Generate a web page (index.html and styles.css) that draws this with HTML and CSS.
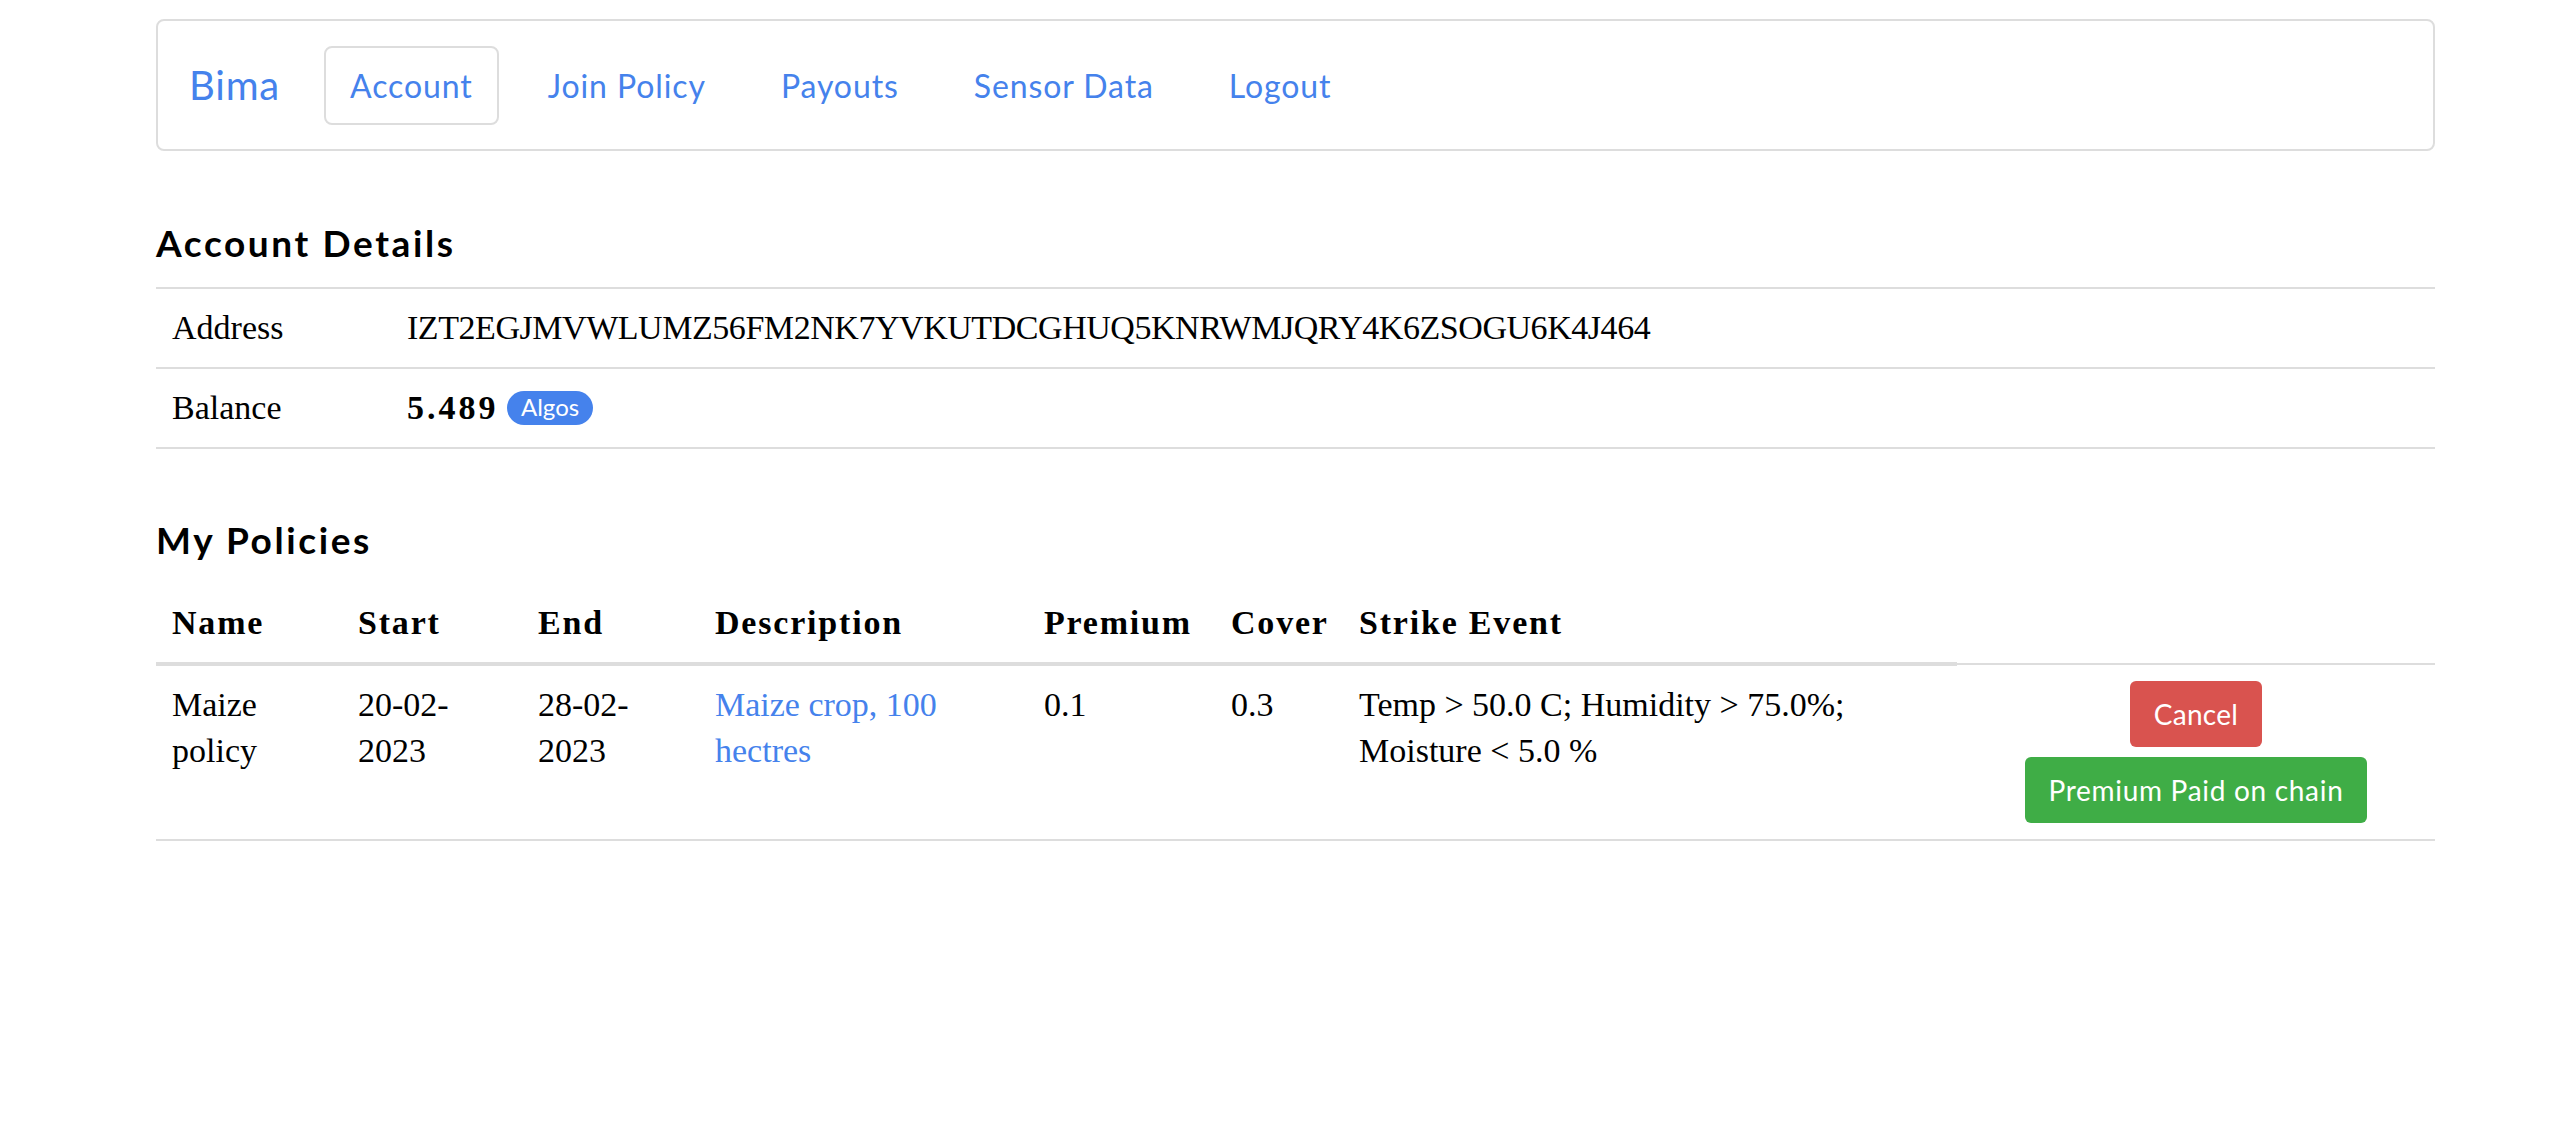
FILE: index.html
```html
<!DOCTYPE html>
<html lang="en">
<head>
<meta charset="utf-8">
<title>Bima - Account</title>
<link rel="stylesheet" href="styles.css">
</head>
<body>
<div class="page">
  <nav class="navbar">
    <a class="brand" href="#">Bima</a>
    <ul class="nav">
      <li class="nav-item active"><a href="#">Account</a></li>
      <li class="nav-item"><a href="#">Join Policy</a></li>
      <li class="nav-item"><a href="#">Payouts</a></li>
      <li class="nav-item"><a href="#">Sensor Data</a></li>
      <li class="nav-item"><a href="#">Logout</a></li>
    </ul>
  </nav>

  <h2 class="section-title first">Account Details</h2>
  <table class="table details">
    <tbody>
      <tr>
        <td class="label-col">Address</td>
        <td class="address">IZT2EGJMVWLUMZ56FM2NK7YVKUTDCGHUQ5KNRWMJQRY4K6ZSOGU6K4J464</td>
      </tr>
      <tr>
        <td class="label-col">Balance</td>
        <td><strong class="amount">5.489</strong> <span class="badge">Algos</span></td>
      </tr>
    </tbody>
  </table>

  <h2 class="section-title">My Policies</h2>
  <table class="table policies">
    <colgroup>
      <col class="c-name">
      <col class="c-start">
      <col class="c-end">
      <col class="c-desc">
      <col class="c-prem">
      <col class="c-cover">
      <col class="c-strike">
      <col class="c-actions">
    </colgroup>
    <thead>
      <tr>
        <th>Name</th>
        <th>Start</th>
        <th>End</th>
        <th>Description</th>
        <th>Premium</th>
        <th>Cover</th>
        <th>Strike Event</th>
      </tr>
    </thead>
    <tbody>
      <tr>
        <td>Maize policy</td>
        <td>20-02-2023</td>
        <td>28-02-2023</td>
        <td><a class="link" href="#">Maize crop, 100 hectres</a></td>
        <td>0.1</td>
        <td>0.3</td>
        <td>Temp &gt; 50.0 C; Humidity &gt; 75.0%; Moisture &lt; 5.0 %</td>
        <td class="actions">
          <div class="action-stack">
            <button class="btn btn-danger">Cancel</button>
            <button class="btn btn-success">Premium Paid on chain</button>
          </div>
        </td>
      </tr>
    </tbody>
  </table>
</div>
</body>
</html>
```

FILE: styles.css
```css
* { box-sizing: border-box; }

html, body {
  margin: 0;
  padding: 0;
  background: #ffffff;
}

body {
  font-family: "Liberation Serif", "DejaVu Serif", serif;
  font-size: 34px;
  line-height: 46px;
  color: #000000;
}

.page {
  width: 2279px;
  margin-left: 156px;
  padding-top: 19px;
}

/* ---------- navbar ---------- */
.navbar {
  height: 132px;
  border: 2px solid #dddddd;
  border-radius: 8px;
  display: flex;
  align-items: center;
  padding-left: 31px;
  font-family: "Lato", "Open Sans", sans-serif;
}

.brand {
  font-size: 40px;
  line-height: 48px;
  color: #4582ec;
  text-decoration: none;
  margin-right: 44px;
  letter-spacing: 0.8px;
}

.nav {
  list-style: none;
  margin: 0;
  padding: 0;
  display: flex;
  gap: 23px;
}

.nav-item a {
  display: block;
  height: 79px;
  line-height: 75px;
  padding: 0 24px;
  border: 2px solid transparent;
  border-radius: 8px;
  font-size: 32px;
  color: #4582ec;
  text-decoration: none;
  letter-spacing: 0.9px;
}

.nav-item.active a {
  border-color: #dddddd;
}

/* ---------- headings ---------- */
.section-title {
  font-family: "Lato", "Open Sans", sans-serif;
  font-weight: 700;
  font-size: 37px;
  line-height: 40px;
  letter-spacing: 2.6px;
  margin: 71px 0 24px 0;
  color: #000000;
}

.section-title.first {
  margin-top: 72px;
}

/* ---------- tables ---------- */
.table {
  width: 100%;
  border-collapse: collapse;
  border-spacing: 0;
}

.table td,
.table th {
  padding: 16px;
  text-align: left;
  vertical-align: top;
}

.table td {
  border-top: 2px solid #dddddd;
}

.table tbody tr:last-child td {
  border-bottom: 2px solid #dddddd;
}

.details .label-col {
  width: 235px;
}

.address {
  letter-spacing: -0.45px;
}

.amount {
  font-weight: 700;
  letter-spacing: 3px;
}

.badge {
  display: inline-block;
  vertical-align: 3px;
  height: 34px;
  line-height: 32px;
  padding: 0 14px;
  border-radius: 17px;
  background: #4582ec;
  color: #ffffff;
  font-family: "Lato", "Open Sans", sans-serif;
  font-size: 24px;
}

.policies {
  table-layout: fixed;
}

.policies thead th {
  font-weight: 700;
  letter-spacing: 1.8px;
  border-bottom: 4px solid #dddddd;
}

.c-name { width: 186px; }
.c-start { width: 180px; }
.c-end { width: 177px; }
.c-desc { width: 329px; }
.c-prem { width: 187px; }
.c-cover { width: 128px; }
.c-strike { width: 614px; }
.c-actions { width: 478px; }

.link {
  color: #4582ec;
  text-decoration: none;
}

.actions {
  text-align: center;
}

.action-stack {
  display: flex;
  flex-direction: column;
  align-items: center;
  gap: 10px;
}

.btn {
  height: 66px;
  padding: 0 24px;
  border: none;
  border-radius: 6px;
  font-family: "Lato", "Open Sans", sans-serif;
  font-size: 28px;
  color: #ffffff;
  cursor: pointer;
}

.btn-danger {
  background: #d9534f;
  letter-spacing: 0.3px;
}

.btn-success {
  background: #3fad46;
  letter-spacing: 0.7px;
}
```
